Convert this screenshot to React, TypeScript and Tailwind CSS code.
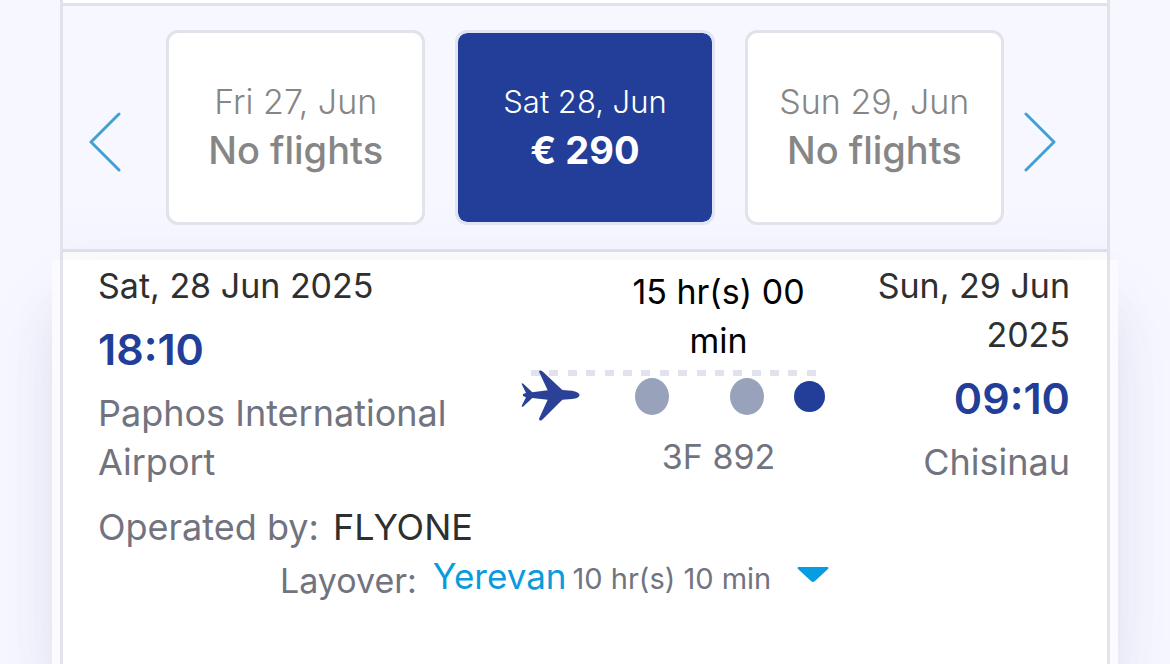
import React from 'react'

interface DayCardProps {
  date: string
  label: string
  selected?: boolean
}

const DayCard: React.FC<DayCardProps> = ({ date, label, selected }) => {
  return (
    <button
      type="button"
      aria-pressed={!!selected}
      className={`flex h-[195px] flex-col items-center justify-center rounded-xl border-[3px] pb-1 ${
        selected
          ? 'border-[#e1e4f2] bg-[#223e98] bg-clip-padding text-white'
          : 'border-[#e2e2ea] bg-white text-[#868686]'
      }`}
    >
      <span className={`leading-[49px] font-light ${selected ? 'text-[31px]' : 'text-[34px]'}`}>{date}</span>
      <span className={`text-[38px] leading-[49px] ${selected ? 'font-bold' : 'font-medium'}`}>{label}</span>
    </button>
  )
}

interface ArrowButtonProps {
  label: string
  points: string
}

const ArrowButton: React.FC<ArrowButtonProps> = ({ label, points }) => {
  return (
    <button type="button" aria-label={label} className="shrink-0 pt-7">
      <svg width="32" height="60" viewBox="0 0 32 60" fill="none" stroke="#469fd2" strokeWidth="3" strokeLinecap="round" strokeLinejoin="round">
        <polyline points={points} />
      </svg>
    </button>
  )
}

const PlaneIcon: React.FC = () => {
  return (
    <svg className="shrink-0" width="60" height="52" viewBox="62 330 180 156" fill="#2b4197">
      <path d="M116 335 Q118 328 126 334 L186 390 L215 392 Q236 396 238 405 Q236 415 215 417 L186 419 L125 480 Q117 485 116 476 L142 419 L96 414 L68 440 Q62 442 65 436 L77 412 L68 408 L68 402 L77 399 L65 374 Q62 367 69 371 L96 397 L142 391 Z" />
    </svg>
  )
}

const FlightTrack: React.FC = () => {
  return (
    <div className="relative mt-[5px] flex h-[52px] items-center">
      <div className="absolute inset-x-0 top-0 flex justify-between pr-3 pl-2.5">
        {Array.from({ length: 16 }, (_, i) => (
          <span key={i} className="h-1.5 w-[9px] bg-[#e2e1f0]" />
        ))}
      </div>
      <div className="relative flex items-center">
        <PlaneIcon />
        <span className="ml-[54px] h-[37px] w-[34px] rounded-[50%] bg-[#98a2ba]" />
        <span className="ml-[61px] h-[37px] w-[34px] rounded-[50%] bg-[#98a2ba]" />
        <span className="ml-[30px] h-[31px] w-[31px] rounded-full bg-[#223e98]" />
      </div>
    </div>
  )
}

const days: DayCardProps[] = [
  { date: 'Fri 27, Jun', label: 'No flights' },
  { date: 'Sat 28, Jun', label: '€ 290', selected: true },
  { date: 'Sun 29, Jun', label: 'No flights' },
]

export default function App() {
  return (
    <main className="flex min-h-screen flex-col overflow-hidden bg-[#f6f7ff] px-[60px] font-['Inter',sans-serif] text-[34px] leading-[49px]">
      <section className="border-x-[3px] border-[#e2e2ea]">
        <div className="h-1.5 border-b-[3px] border-[#e2e2ea] bg-white" />
        <div className="flex items-center border-b-[3px] border-[#dfdfe9] bg-linear-to-b from-[#f7f8ff] from-75% to-[#f4f4fe] pt-6 pr-[51px] pb-6 pl-[26px]">
          <ArrowButton label="Previous days" points="30,2 2,30 30,58" />
          <div className="mr-5 ml-[45px] grid flex-1 grid-cols-3 gap-[30px]">
            {days.map((day) => (
              <DayCard key={day.date} {...day} />
            ))}
          </div>
          <ArrowButton label="Next days" points="2,2 30,30 2,58" />
        </div>
        <div className="h-2 bg-[#fbfbfc]" />
      </section>

      <section className="-mx-2 flex flex-1 flex-col bg-[#fafaff] px-2 shadow-[0_40px_80px_0_rgba(70,70,190,0.06),0_50px_40px_0_rgba(100,50,80,0.08)]">
        <div className="flex-1 border-x-[3px] border-[#e2e2ec] bg-white pt-px pr-[37px] pl-[35px]">
          <div className="flex">
            <div className="flex-1">
              <p className="text-[#2e2f31]">Sat, 28 Jun 2025</p>
              <p className="my-[15px] text-[43px] font-semibold text-[#223e98]">18:10</p>
              <p className="text-4xl leading-[49px] text-[#71737f]">Paphos International Airport</p>
            </div>

            <div className="w-[307px] pt-1.5">
              <p className="pr-4 pl-[104px] text-center text-black">15 hr(s) 00 min</p>
              <FlightTrack />
              <p className="mt-2.5 pl-[88px] text-center text-[#71737f]">3F 892</p>
            </div>

            <div className="ml-[42px] w-[200px] text-right">
              <p className="text-[#2e2f31]">Sun, 29 Jun 2025</p>
              <p className="my-[15px] text-[43px] font-semibold text-[#223e98]">09:10</p>
              <p className="text-4xl leading-[49px] text-[#71737f]">Chisinau</p>
            </div>
          </div>

          <p className="mt-4 text-4xl leading-[49px] text-[#71737f]">
            Operated by: <span className="ml-1 text-[#2e2f31]">FLYONE</span>
          </p>

          <div className="mt-1 flex items-start pl-[182px] text-[#71737f]">
            <span>Layover:</span>
            <a href="#yerevan" className="ml-4 text-[35px] leading-10 text-[#0a9bdc]">Yerevan</a>
            <span className="ml-1.5 text-[29px] leading-[45px]">10 hr(s) 10 min</span>
            <button type="button" aria-label="Show layover details" className="ml-[26px] flex h-[37px] items-center">
              <svg width="32" height="17" viewBox="0 0 32 17" fill="#069de1">
                <path d="M1 1h30q1 1 0 2L18 15q-2 2-4 0L1 3q-1-1 0-2z" />
              </svg>
            </button>
          </div>
        </div>
      </section>
    </main>
  )
}
